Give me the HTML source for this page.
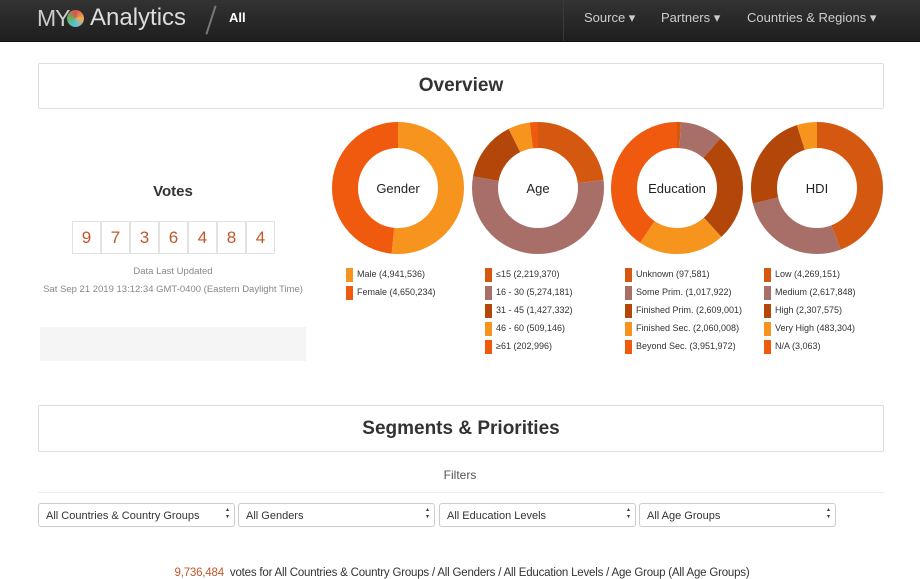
<!DOCTYPE html>
<html><head><meta charset="utf-8"><style>
body{margin:0;width:920px;height:578px;overflow:hidden;background:#fff;font-family:"Liberation Sans",sans-serif;position:relative;color:#333}
.nav{position:absolute;left:0;top:0;width:920px;height:41px;background:linear-gradient(#333,#1e1e1e);border-bottom:1px solid #111}
.abs{position:absolute}
.box{position:absolute;left:38px;width:844px;border:1px solid #ddd;border-radius:2px;text-align:center;font-weight:bold;font-size:19px;color:#333}
.dig{position:absolute;top:221px;width:27px;height:31px;border:1px solid #e2e2e2;color:#c0582a;font-size:17px;text-align:center;line-height:31px}
.lg{position:absolute;font-size:9px;color:#333;white-space:nowrap}
.lg i{display:inline-block;width:7px;height:14px;vertical-align:middle;margin-right:4px}
.sel{position:absolute;top:503px;height:24px;border:1px solid #ccc;border-radius:3px;font-size:11px;line-height:24px;padding-left:7px;box-sizing:border-box;color:#333}
.sel:after{content:"▴\A▾";white-space:pre;position:absolute;right:5px;top:3px;font-size:6px;line-height:7px}
</style></head><body>
<div class="nav">
 <div class="abs" style="left:37px;top:5px;font-size:23px;color:#ccc;letter-spacing:-1px">MY</div>
 <div class="abs" style="left:67px;top:10px;width:17px;height:17px;border-radius:50%;background:conic-gradient(#d9534f,#f0ad4e,#5bc0de,#5cb85c,#d9534f)"></div>
 <div class="abs" style="left:90px;top:4px;font-size:24px;color:#ddd">Analytics</div>
 <div class="abs" style="left:210px;top:5px;width:2px;height:30px;background:#777;transform:rotate(18deg)"></div>
 <div class="abs" style="left:229px;top:10px;font-size:13px;color:#fff;font-weight:bold">All</div>
 <div class="abs" style="left:563px;top:0;width:1px;height:41px;background:#3a3a3a"></div>
 <div class="abs" style="left:584px;top:10px;font-size:13px;color:#ccc">Source ▾</div>
 <div class="abs" style="left:661px;top:10px;font-size:13px;color:#ccc">Partners ▾</div>
 <div class="abs" style="left:747px;top:10px;font-size:13px;color:#ccc">Countries &amp; Regions ▾</div>
</div>
<div class="box" style="top:63px;height:44px;line-height:44px">Overview</div>
<div class="abs" style="left:0;width:346px;top:183px;text-align:center;font-weight:bold;font-size:15px">Votes</div>
<div class="dig" style="left:72px">9</div><div class="dig" style="left:101px">7</div><div class="dig" style="left:130px">3</div><div class="dig" style="left:159px">6</div><div class="dig" style="left:188px">4</div><div class="dig" style="left:217px">8</div><div class="dig" style="left:246px">4</div>
<div class="abs" style="left:0;width:346px;top:266px;text-align:center;font-size:9.5px;color:#888">Data Last Updated</div>
<div class="abs" style="left:0;width:346px;top:284px;text-align:center;font-size:9.5px;color:#888">Sat Sep 21 2019 13:12:34 GMT-0400 (Eastern Daylight Time)</div>
<div class="abs" style="left:40px;top:327px;width:266px;height:34px;background:#f5f5f5"></div>
<svg class="abs" style="left:0;top:0" width="920" height="400">
<g fill="none" stroke-width="26">
<g transform="translate(398,188) rotate(-90)">
<circle r="53" stroke="#f7941d" stroke-dasharray="171.5 333"/>
<circle r="53" stroke="#f05a0e" stroke-dasharray="161.5 333" stroke-dashoffset="-171.5"/>
</g>
<g transform="translate(538,188) rotate(-90)">
<circle r="53" stroke="#d4580f" stroke-dasharray="76.7 333"/>
<circle r="53" stroke="#a86f69" stroke-dasharray="182.3 333" stroke-dashoffset="-76.7"/>
<circle r="53" stroke="#b24709" stroke-dasharray="49.3 333" stroke-dashoffset="-259"/>
<circle r="53" stroke="#f7941d" stroke-dasharray="17.6 333" stroke-dashoffset="-308.3"/>
<circle r="53" stroke="#f05a0e" stroke-dasharray="7 333" stroke-dashoffset="-325.9"/>
</g>
<g transform="translate(677,188) rotate(-90)">
<circle r="53" stroke="#d4580f" stroke-dasharray="3.3 333"/>
<circle r="53" stroke="#a86f69" stroke-dasharray="34.8 333" stroke-dashoffset="-3.3"/>
<circle r="53" stroke="#b24709" stroke-dasharray="89.2 333" stroke-dashoffset="-38.1"/>
<circle r="53" stroke="#f7941d" stroke-dasharray="70.5 333" stroke-dashoffset="-127.3"/>
<circle r="53" stroke="#f05a0e" stroke-dasharray="135.2 333" stroke-dashoffset="-197.8"/>
</g>
<g transform="translate(817,188) rotate(-90)">
<circle r="53" stroke="#d4580f" stroke-dasharray="146.9 333"/>
<circle r="53" stroke="#a86f69" stroke-dasharray="90 333" stroke-dashoffset="-146.9"/>
<circle r="53" stroke="#b24709" stroke-dasharray="79.4 333" stroke-dashoffset="-236.9"/>
<circle r="53" stroke="#f7941d" stroke-dasharray="16.6 333" stroke-dashoffset="-316.3"/>
</g>
</g>
<g font-family="Liberation Sans, sans-serif" font-size="13" text-anchor="middle" fill="#222">
<text x="398" y="193">Gender</text><text x="538" y="193">Age</text><text x="677" y="193">Education</text><text x="817" y="193">HDI</text>
</g>
</svg>
<div class="lg" style="left:346px;top:265px;line-height:18px">
<div><i style="background:#f7941d"></i>Male (4,941,536)</div><div><i style="background:#f05a0e"></i>Female (4,650,234)</div></div>
<div class="lg" style="left:485px;top:265px;line-height:18px">
<div><i style="background:#d4580f"></i>≤15 (2,219,370)</div><div><i style="background:#a86f69"></i>16 - 30 (5,274,181)</div><div><i style="background:#b24709"></i>31 - 45 (1,427,332)</div><div><i style="background:#f7941d"></i>46 - 60 (509,146)</div><div><i style="background:#f05a0e"></i>≥61 (202,996)</div></div>
<div class="lg" style="left:625px;top:265px;line-height:18px">
<div><i style="background:#d4580f"></i>Unknown (97,581)</div><div><i style="background:#a86f69"></i>Some Prim. (1,017,922)</div><div><i style="background:#b24709"></i>Finished Prim. (2,609,001)</div><div><i style="background:#f7941d"></i>Finished Sec. (2,060,008)</div><div><i style="background:#f05a0e"></i>Beyond Sec. (3,951,972)</div></div>
<div class="lg" style="left:764px;top:265px;line-height:18px">
<div><i style="background:#d4580f"></i>Low (4,269,151)</div><div><i style="background:#a86f69"></i>Medium (2,617,848)</div><div><i style="background:#b24709"></i>High (2,307,575)</div><div><i style="background:#f7941d"></i>Very High (483,304)</div><div><i style="background:#f05a0e"></i>N/A (3,063)</div></div>
<div class="box" style="top:405px;height:45px;line-height:45px">Segments &amp; Priorities</div>
<div class="abs" style="left:0;width:920px;top:468px;text-align:center;font-size:12px;color:#555">Filters</div>
<div class="abs" style="left:38px;top:492px;width:846px;height:1px;background:#eee"></div>
<div class="sel" style="left:38px;width:197px">All Countries &amp; Country Groups</div>
<div class="sel" style="left:238px;width:197px">All Genders</div>
<div class="sel" style="left:439px;width:197px">All Education Levels</div>
<div class="sel" style="left:639px;width:197px">All Age Groups</div>
<div class="abs" style="left:0;width:920px;top:567px;text-align:center;font-size:11.5px;letter-spacing:-0.2px;color:#333;padding-left:2px"><span style="color:#c0582a">9,736,484</span>&nbsp; votes for All Countries &amp; Country Groups / All Genders / All Education Levels / Age Group (All Age Groups)</div>
</body></html>
